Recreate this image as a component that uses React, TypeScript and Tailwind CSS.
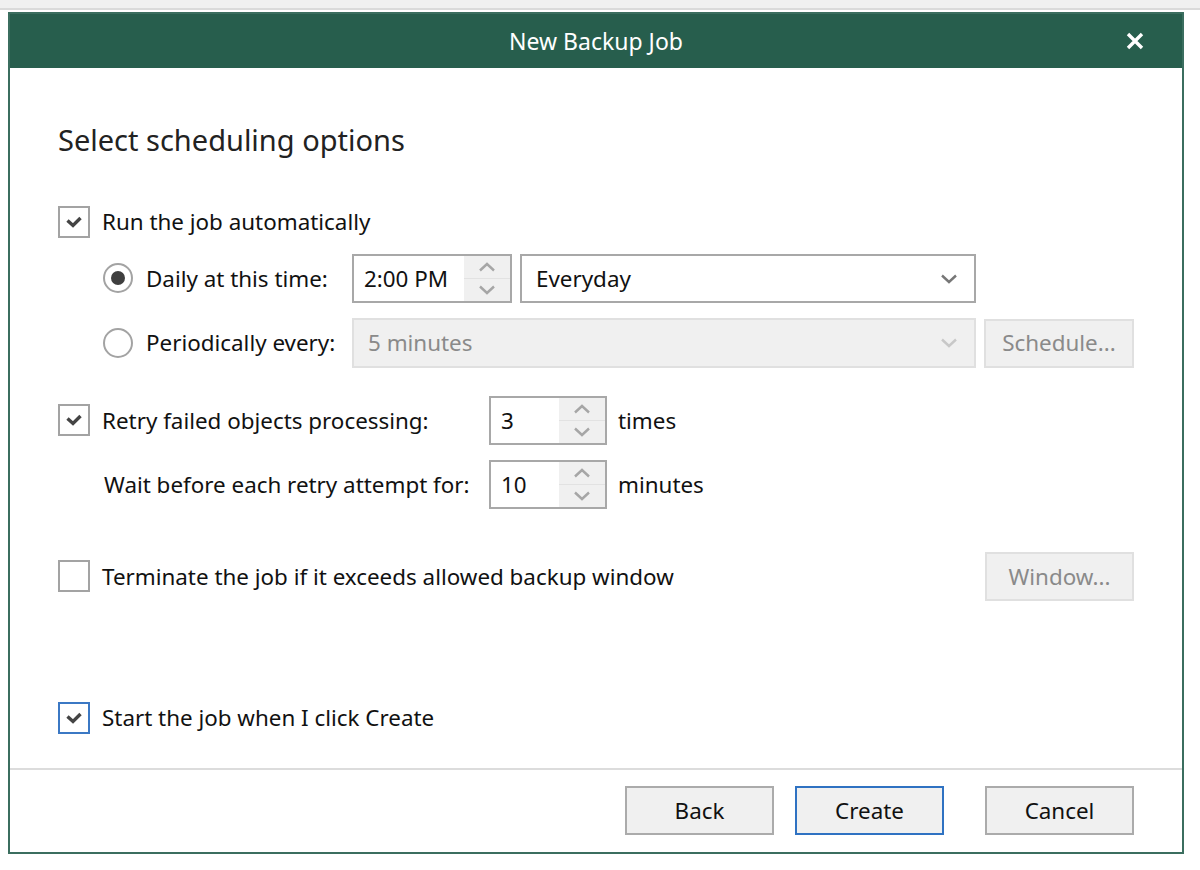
import React from "react"

const font = { fontFamily: '"Noto Sans", "Open Sans", sans-serif' }

function Check({ checked, focused }: { checked?: boolean; focused?: boolean }) {
  return (
    <div
      className={`w-8 h-8 shrink-0 flex items-center justify-center border-2 bg-white ${
        focused ? "border-[#3b78c4]" : "border-[#a3a3a3]"
      }`}
    >
      {checked && (
        <svg width="18" height="14" viewBox="0 0 18 14">
          <path d="M2.5 5.5 L8 10.5 L15.5 3" fill="none" stroke="#444" strokeWidth="3.4" />
        </svg>
      )}
    </div>
  )
}

function Radio({ selected }: { selected?: boolean }) {
  return (
    <div className="w-[30px] h-[30px] shrink-0 rounded-full border-2 border-[#a3a3a3] bg-white flex items-center justify-center">
      {selected && <div className="w-[14px] h-[14px] rounded-full bg-[#3f3f3f]" />}
    </div>
  )
}

function Chevron({ up, color }: { up?: boolean; color: string }) {
  return (
    <svg width="18" height="10" viewBox="0 0 18 10">
      <path d={up ? "M2 8.5 L9 2 L16 8.5" : "M2 1.5 L9 8 L16 1.5"} fill="none" stroke={color} strokeWidth="2.4" />
    </svg>
  )
}

function Spin({ value, w }: { value: string; w: string }) {
  return (
    <div className={`${w} h-[49px] shrink-0 flex border-2 border-[#a8a8a8] bg-white`}>
      <div className="flex-1 flex items-center pl-[10px] text-[22.4px] text-[#111]">{value}</div>
      <div className="w-[46px] flex flex-col bg-[#f0f0f0]">
        <div className="flex-1 flex items-center justify-center border-b border-[#e2e2e2]">
          <Chevron up color="#a6a6a6" />
        </div>
        <div className="flex-1 flex items-center justify-center">
          <Chevron color="#a6a6a6" />
        </div>
      </div>
    </div>
  )
}

function Btn({ label, primary, disabled, w = "w-[149px]" }: { label: string; primary?: boolean; disabled?: boolean; w?: string }) {
  return (
    <div
      className={`${w} h-[49px] shrink-0 flex items-center justify-center text-[22.4px] border-2 ${
        disabled
          ? "bg-[#f0f0f0] border-[#e0e0e0] text-[#8a8a8a]"
          : primary
          ? "bg-[#f0f0f0] border-[#2f72c2] text-[#111]"
          : "bg-[#f0f0f0] border-[#ababab] text-[#111]"
      }`}
    >
      {label}
    </div>
  )
}

export default function App() {
  return (
    <div className="w-[1200px] h-[870px] bg-white text-[#111]" style={font}>
      <div className="h-[10px] bg-[#f0f0f0] border-b-2 border-[#dadada]" />
      <div className="pt-[2px] pl-[8px]">
        {/* Dialog */}
        <div className="w-[1176px] h-[842px] border-2 border-[#3b6e5f] flex flex-col">
          <div className="h-[54px] bg-[#275e4d] flex items-center justify-center relative text-white text-[23px]">
            New Backup Job
            <svg className="absolute right-[38px] top-[18px]" width="18" height="18" viewBox="0 0 18 18">
              <path d="M2 2 L16 16 M16 2 L2 16" stroke="white" strokeWidth="3.4" />
            </svg>
          </div>

          <div className="flex-1 flex flex-col px-[48px]">
            <div className="mt-[54px] h-9 flex items-center text-[29px] text-[#222]">Select scheduling options</div>

            {/* Run automatically */}
            <div className="mt-[48px] flex items-center gap-3 text-[22.4px] h-8">
              <Check checked />
              <span>Run the job automatically</span>
            </div>

            <div className="mt-[16px] flex items-center h-[49px]">
              <div className="w-[294px] pl-[45px] flex items-center gap-[13px] text-[22.4px]">
                <Radio selected />
                <span>Daily at this time:</span>
              </div>
              <Spin value="2:00 PM" w="w-[160px]" />
              <div className="ml-2 w-[456px] h-[49px] border-2 border-[#a8a8a8] bg-white flex items-center justify-between pl-[14px] pr-[16px] text-[22.4px]">
                <span>Everyday</span>
                <Chevron color="#777" />
              </div>
            </div>

            <div className="mt-[15px] flex items-center h-[50px]">
              <div className="w-[294px] pl-[45px] flex items-center gap-[13px] text-[22.4px]">
                <Radio />
                <span>Periodically every:</span>
              </div>
              <div className="w-[624px] h-[50px] border-2 border-[#e0e0e0] bg-[#f0f0f0] flex items-center justify-between pl-[14px] pr-[16px] text-[22.4px] text-[#8a8a8a]">
                <span>5 minutes</span>
                <Chevron color="#c8c8c8" />
              </div>
              <div className="ml-2">
                <Btn label="Schedule..." disabled w="w-[150px]" />
              </div>
            </div>

            {/* Retry */}
            <div className="mt-[28px] flex items-center h-[49px] text-[22.4px]">
              <div className="w-[431px] flex items-center gap-3">
                <Check checked />
                <span>Retry failed objects processing:</span>
              </div>
              <Spin value="3" w="w-[118px]" />
              <span className="ml-[11px]">times</span>
            </div>

            <div className="mt-[15px] flex items-center h-[49px] text-[22.4px]">
              <div className="w-[431px] pl-[46px]">Wait before each retry attempt for:</div>
              <Spin value="10" w="w-[118px]" />
              <span className="ml-[11px]">minutes</span>
            </div>

            {/* Terminate */}
            <div className="mt-[43px] flex items-center justify-between h-[49px] text-[22.4px]">
              <div className="flex items-center gap-3">
                <Check />
                <span>Terminate the job if it exceeds allowed backup window</span>
              </div>
              <Btn label="Window..." disabled />
            </div>

            <div className="mt-[101px] flex items-center gap-3 text-[22.4px] h-8">
              <Check checked focused />
              <span>Start the job when I click Create</span>
            </div>
          </div>

          {/* Footer */}
          <div className="border-t-2 border-[#dcdcdc] h-[84px] flex items-center justify-end px-[48px] pb-[1px]">
            <Btn label="Back" />
            <div className="ml-[21px]">
              <Btn label="Create" primary />
            </div>
            <div className="ml-[41px]">
              <Btn label="Cancel" />
            </div>
          </div>
        </div>
      </div>
    </div>
  )
}
